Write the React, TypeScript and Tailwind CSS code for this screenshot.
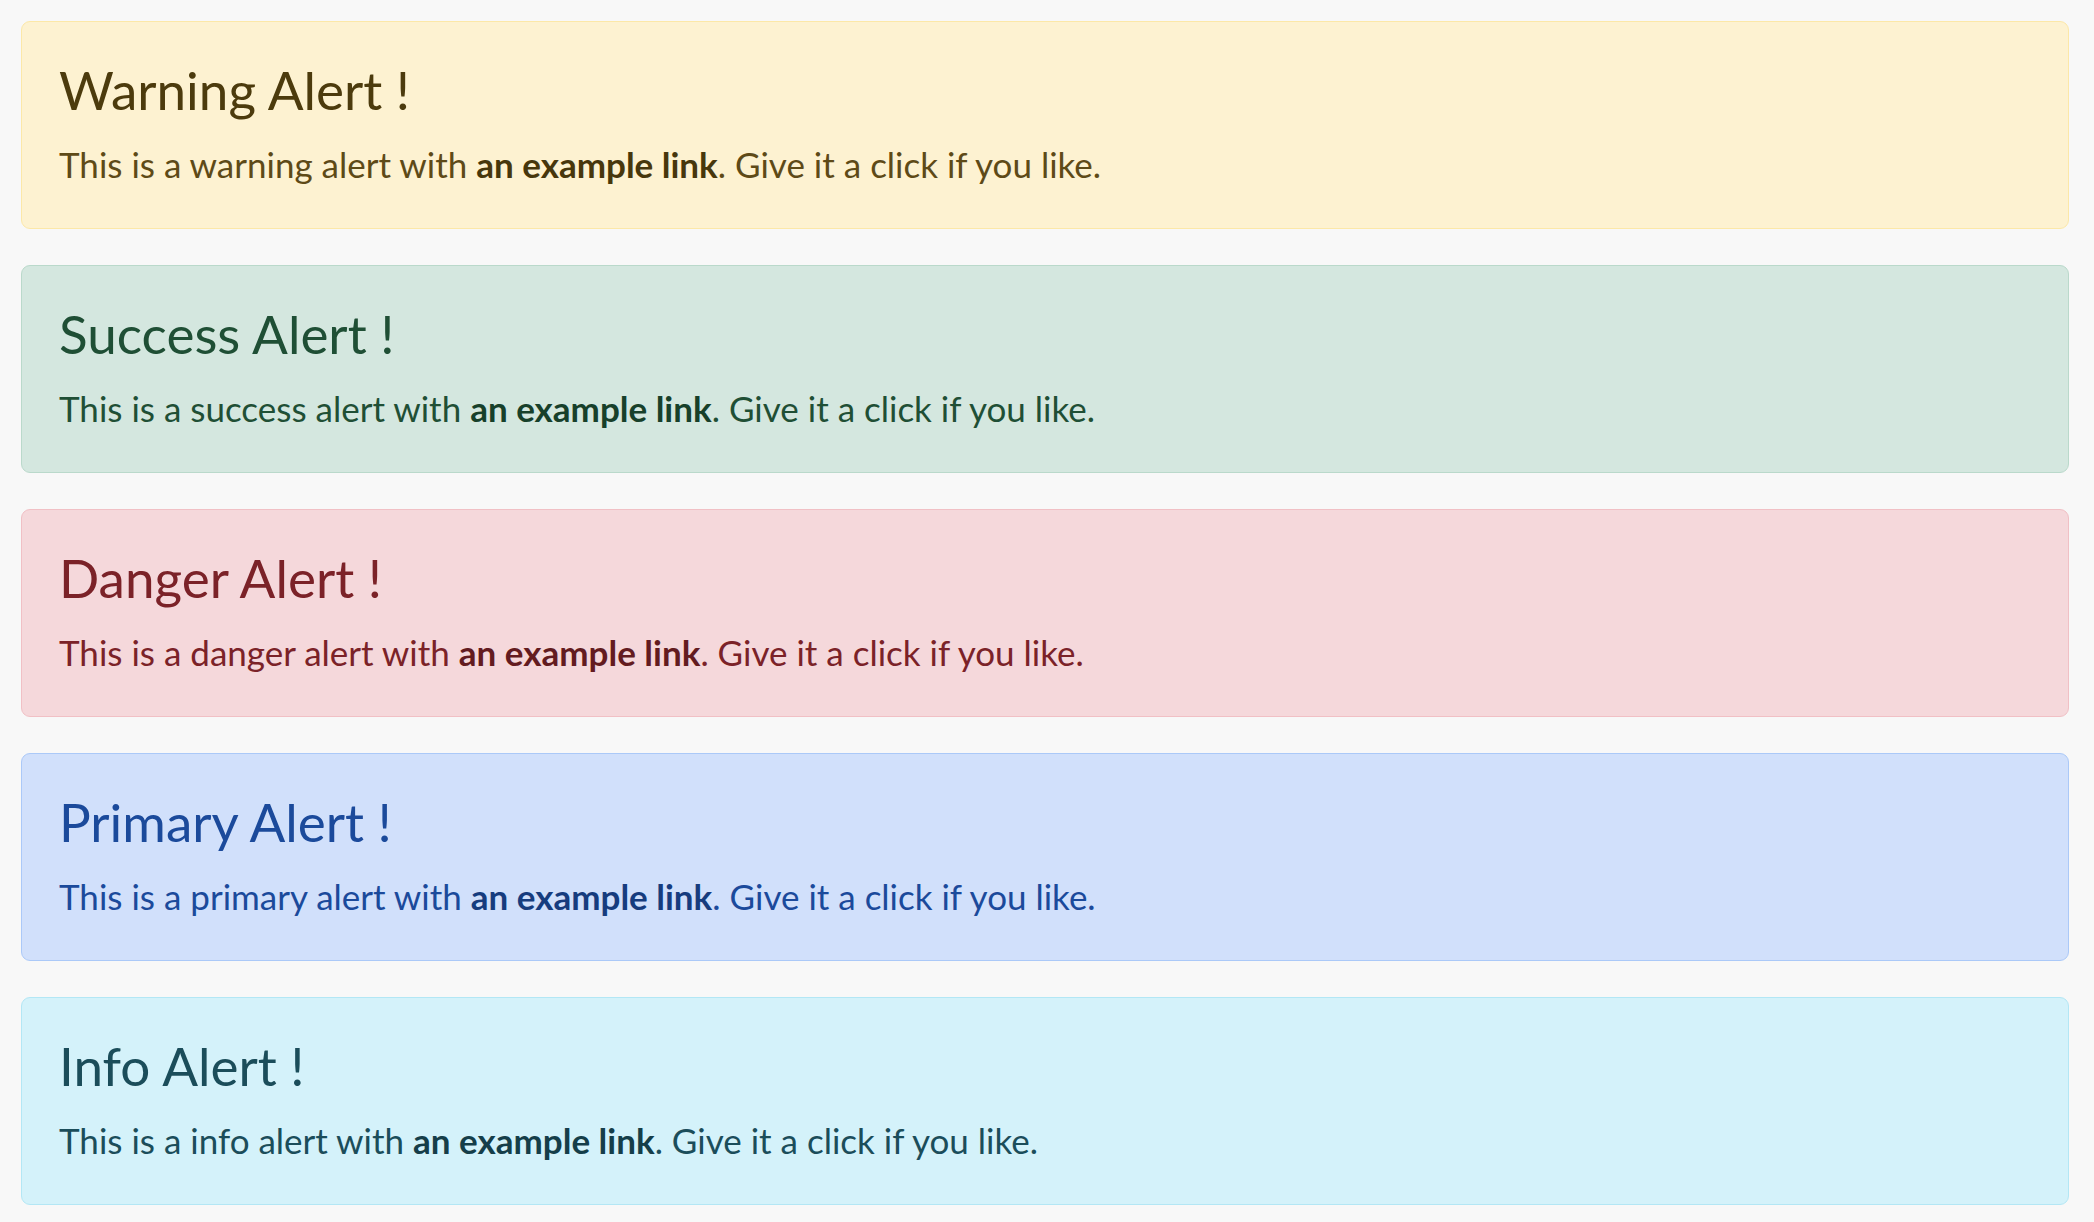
const alerts = [
  {
    title: 'Warning Alert !',
    kind: 'warning',
    box: 'bg-[#fdf2d1] border-[#fce8a8]',
    title_color: 'text-[#4c3b0d]',
    text: 'text-[#5e4a17]',
    link: 'text-[#47370c]',
  },
  {
    title: 'Success Alert !',
    kind: 'success',
    box: 'bg-[#d4e7df] border-[#bad9cb]',
    title_color: 'text-[#1f4f35]',
    text: 'text-[#1f4f35]',
    link: 'text-[#17402a]',
  },
  {
    title: 'Danger Alert !',
    kind: 'danger',
    box: 'bg-[#f5d8db] border-[#f1c0c5]',
    title_color: 'text-[#7b2228]',
    text: 'text-[#7b2228]',
    link: 'text-[#631b20]',
  },
  {
    title: 'Primary Alert !',
    kind: 'primary',
    box: 'bg-[#d1e0fb] border-[#abc9f8]',
    title_color: 'text-[#1b4a9b]',
    text: 'text-[#1b4a9b]',
    link: 'text-[#163c7e]',
  },
  {
    title: 'Info Alert !',
    kind: 'info',
    box: 'bg-[#d4f2fa] border-[#b3e7f5]',
    title_color: 'text-[#1b4d5a]',
    text: 'text-[#1b4d5a]',
    link: 'text-[#153e49]',
  },
]

export default function App() {
  return (
    <div className="min-h-screen bg-[#f8f8f8] pt-[21px] pb-[21px] pl-[21px] pr-[25px] flex flex-col gap-[36px] font-['Lato','Noto_Sans',sans-serif]">
      {alerts.map((a) => (
        <div key={a.kind} className={`border rounded-[9px] px-[37px] pt-[37px] pb-[38px] ${a.box}`}>
          <h4 className={`text-[53px] leading-[62px] font-normal mb-[18px] ${a.title_color}`}>{a.title}</h4>
          <p className={`text-[35px] leading-[51px] ${a.text}`}>
            This is a {a.kind} alert with <a className={`font-bold ${a.link}`}>an example link</a>. Give it a click if
            you like.
          </p>
        </div>
      ))}
    </div>
  )
}
